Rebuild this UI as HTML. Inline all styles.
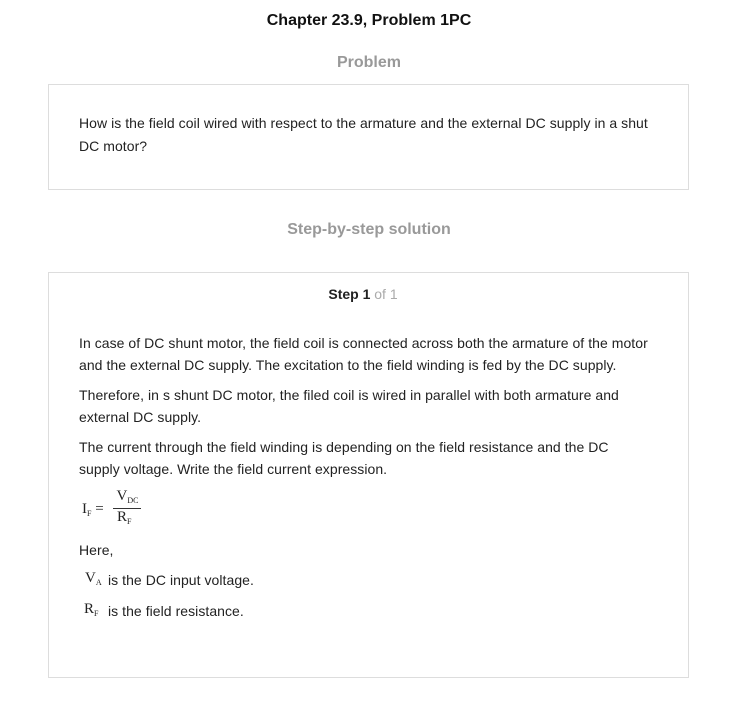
<!DOCTYPE html>
<html><head><style>
body{margin:0;width:738px;height:704px;background:#fff;font-family:"Liberation Sans",sans-serif;color:#222;position:relative;overflow:hidden}
.a{position:absolute;white-space:nowrap}
.box{position:absolute;border:1px solid #ddd;box-sizing:border-box}
p{position:absolute;left:79px;margin:0;font-size:14px;line-height:22px;white-space:nowrap;letter-spacing:0.05px}
.m{font-family:"Liberation Serif",serif;font-size:15px;color:#222}
sub{font-size:8px;vertical-align:-3px}
</style></head><body>
<div class="a" style="left:0;width:738px;text-align:center;top:12px;font-size:16px;font-weight:bold;color:#111">Chapter 23.9, Problem 1PC</div>
<div class="a" style="left:0;width:738px;text-align:center;top:54px;font-size:16px;font-weight:bold;color:#999">Problem</div>
<div class="box" style="left:48px;top:84px;width:641px;height:106px"></div>
<p style="top:112px">How is the field coil wired with respect to the armature and the external DC supply in a shut</p>
<p style="top:135px">DC motor?</p>
<div class="a" style="left:0;width:738px;text-align:center;top:221px;font-size:16px;font-weight:bold;color:#999">Step-by-step solution</div>
<div class="box" style="left:48px;top:272px;width:641px;height:406px"></div>
<div class="a" style="left:0;width:726px;text-align:center;top:286px;font-size:14px;font-weight:bold;color:#222">Step 1 <span style="font-weight:normal;color:#aaa">of 1</span></div>
<p style="top:332px">In case of DC shunt motor, the field coil is connected across both the armature of the motor</p>
<p style="top:354px">and the external DC supply. The excitation to the field winding is fed by the DC supply.</p>
<p style="top:384px">Therefore, in s shunt DC motor, the filed coil is wired in parallel with both armature and</p>
<p style="top:406px">external DC supply.</p>
<p style="top:436px">The current through the field winding is depending on the field resistance and the DC</p>
<p style="top:458px">supply voltage. Write the field current expression.</p>
<div class="a m" style="left:82px;top:501px">I<sub>F</sub> =</div>
<div class="a m" style="left:115px;top:488px;text-align:center;width:25px">V<sub>DC</sub></div>
<div class="a" style="left:113px;top:508px;width:28px;border-top:1px solid #333"></div>
<div class="a m" style="left:117px;top:509px">R<sub>F</sub></div>
<p style="top:539px">Here,</p>
<div class="a m" style="left:85px;top:570px">V<sub>A</sub></div>
<p style="top:569px;left:108px">is the DC input voltage.</p>
<div class="a m" style="left:84px;top:601px">R<sub>F</sub></div>
<p style="top:600px;left:108px">is the field resistance.</p>
</body></html>
